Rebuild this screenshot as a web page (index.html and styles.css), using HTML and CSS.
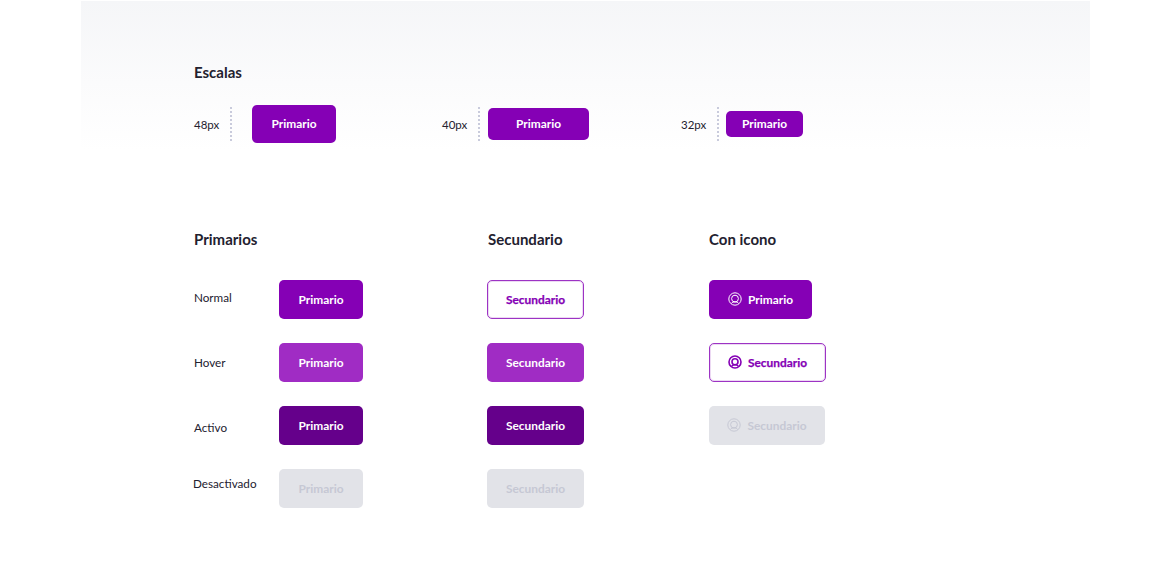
FILE: index.html
```html
<!DOCTYPE html>
<html lang="es">
  <head>
    <meta charset="UTF-8" />
    <title>Botones</title>
    <link rel="stylesheet" href="styles.css">
  </head>
  <body>
    <section class="scales">
      <h2 class="title">Escalas</h2>
      <div class="scale-row">
        <div class="scale">
          <span class="scale-label">48px</span>
          <span class="btn btn-48">Primario</span>
        </div>
        <div class="scale">
          <span class="scale-label">40px</span>
          <span class="btn btn-40">Primario</span>
        </div>
        <div class="scale">
          <span class="scale-label">32px</span>
          <span class="btn btn-32">Primario</span>
        </div>
      </div>
    </section>

    <section class="states">
      <div class="col col-primary">
        <h2 class="title">Primarios</h2>
        <div class="stack">
          <div class="state"><span class="state-label normal">Normal</span><span class="btn">Primario</span></div>
          <div class="state"><span class="state-label hover">Hover</span><span class="btn is-hover">Primario</span></div>
          <div class="state"><span class="state-label active">Activo</span><span class="btn is-active">Primario</span></div>
          <div class="state"><span class="state-label disabled">Desactivado</span><span class="btn is-disabled">Primario</span></div>
        </div>
      </div>

      <div class="col col-secondary">
        <h2 class="title">Secundario</h2>
        <div class="stack">
          <span class="btn btn-sec is-outline">Secundario</span>
          <span class="btn btn-sec is-hover">Secundario</span>
          <span class="btn btn-sec is-active">Secundario</span>
          <span class="btn btn-sec is-disabled">Secundario</span>
        </div>
      </div>

      <div class="col">
        <h2 class="title">Con icono</h2>
        <div class="stack">
          <span class="btn btn-icon"><svg class="icon" viewBox="0 0 14 14"><circle cx="7" cy="7" r="6.2"/><circle cx="7" cy="6.6" r="3.4"/><path d="M3.4 11.4c1-1.2 2.2-1.5 3.6-1.5s2.6.3 3.6 1.5"/></svg>Primario</span>
          <span class="btn btn-icon btn-icon-sec is-outline"><svg class="icon icon-bold" viewBox="0 0 14 14"><circle cx="7" cy="7" r="6"/><circle cx="7" cy="6.8" r="3"/><path d="M3.6 11.2c1-1.1 2.1-1.4 3.4-1.4s2.4.3 3.4 1.4"/></svg>Secundario</span>
          <span class="btn btn-icon btn-icon-dis is-disabled"><svg class="icon" viewBox="0 0 14 14"><circle cx="7" cy="7" r="6.2"/><circle cx="7" cy="6.6" r="3.4"/><path d="M3.4 11.4c1-1.2 2.2-1.5 3.6-1.5s2.6.3 3.6 1.5"/></svg>Secundario</span>
        </div>
      </div>
    </section>
  </body>
</html>
```

FILE: styles.css
```css
body {
  font-family: Lato, "Noto Sans", sans-serif;
  margin: 0;
  padding: 0;
  background: #fff;
  color: #23212f;
  overflow: hidden;
}
.title {
  margin: 0;
  font-size: 15px;
  line-height: 20px;
  font-weight: 700;
  color: #23212f;
}
.scales {
  margin: 1px 83px 0 81px;
  height: 150px;
  padding: 61px 0 0 113px;
  box-sizing: border-box;
  background: linear-gradient(to bottom, #f5f6f8, #fbfbfc 55%, #fff);
}
.scale-row {
  display: grid;
  grid-template-columns: 248px 239px auto;
  align-items: center;
  height: 38px;
  margin-top: 23px;
}
.scale {
  display: flex;
  align-items: center;
}
.scale-label {
  width: 38px;
  font-size: 11.5px;
  height: 34px;
  line-height: 36px;
  border-right: 2px dotted #c9cbdc;
  box-sizing: border-box;
  margin-right: 20px;
}
.scale:nth-child(2) .scale-label {
  margin-right: 8px;
}
.scale:nth-child(3) .scale-label {
  margin-right: 7px;
}
.btn {
  display: flex;
  align-items: center;
  justify-content: center;
  box-sizing: border-box;
  width: 84px;
  height: 39px;
  padding-bottom: 1px;
  border-radius: 5px;
  background: #8500b5;
  color: #fff;
  font-size: 11.9px;
  font-weight: 700;
}
.btn-48 {
  height: 38px;
}
.btn-40 {
  width: 101px;
  height: 32px;
}
.btn-32 {
  width: 77px;
  height: 26px;
  padding-bottom: 2px;
}
.states {
  display: flex;
  padding: 78px 0 0 194px;
}
.col-primary {
  width: 294px;
}
.col-secondary {
  width: 221px;
}
.stack {
  display: flex;
  flex-direction: column;
  align-items: flex-start;
  gap: 24px;
  margin-top: 31px;
}
.col-secondary .stack {
  margin-left: -1px;
}
.state {
  display: flex;
  width: 100%;
  align-items: flex-start;
}
.state-label {
  width: 85px;
  font-size: 11.7px;
  line-height: 16px;
}
.state-label.normal {
  margin-top: 9px;
}
.state-label.hover {
  margin-top: 11px;
}
.state-label.active {
  margin-top: 13px;
}
.state-label.disabled {
  margin: 6px 0 0 -1px;
  width: 86px;
}
.btn-sec {
  width: 97px;
}
.btn-icon {
  width: 103px;
  gap: 6px;
}
.btn-icon-sec {
  width: 117px;
}
.btn-icon-dis {
  width: 116px;
}
.is-hover {
  background: #a02cc4;
}
.is-active {
  background: #65008b;
}
.is-disabled {
  background: #e2e3e8;
  color: #c6c8d4;
}
.is-outline {
  background: #fff;
  color: #8500b5;
  border: 1px solid #9d33c4;
  box-shadow: inset 0 0 0 1px #ecd9f3;
  -webkit-text-stroke: 0.25px #8500b5;
}
.icon {
  width: 14px;
  height: 14px;
  fill: none;
  stroke: currentColor;
  stroke-width: 1;
}
.icon-bold {
  stroke-width: 1.6;
}
```
